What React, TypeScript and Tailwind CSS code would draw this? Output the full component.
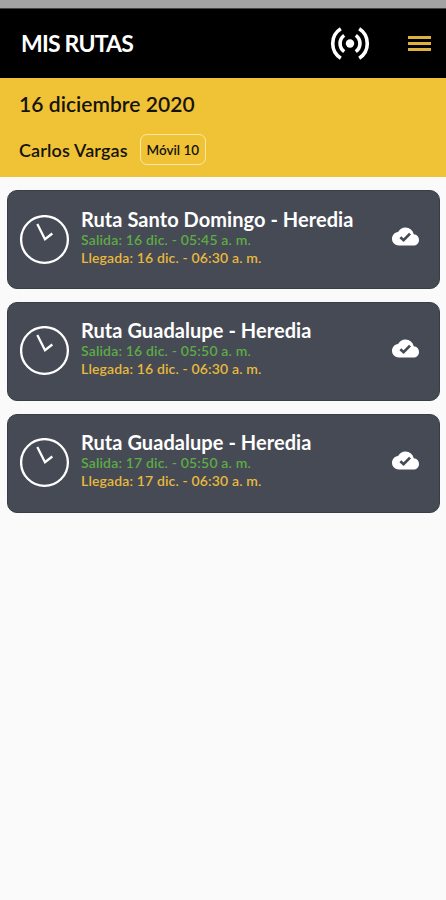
import React from 'react';

interface Route {
  id: number;
  name: string;
  departure: string;
  arrival: string;
}

const routes: Route[] = [
  { id: 1, name: 'Ruta Santo Domingo - Heredia', departure: '16 dic. - 05:45 a. m.', arrival: '16 dic. - 06:30 a. m.' },
  { id: 2, name: 'Ruta Guadalupe - Heredia', departure: '16 dic. - 05:50 a. m.', arrival: '16 dic. - 06:30 a. m.' },
  { id: 3, name: 'Ruta Guadalupe - Heredia', departure: '17 dic. - 05:50 a. m.', arrival: '17 dic. - 06:30 a. m.' },
];

const BroadcastIcon: React.FC = () => (
  <svg width="40" height="34" viewBox="0 0 40 34" fill="none" stroke="white" strokeWidth="3.6">
    <circle cx="20" cy="16.5" r="4.2" fill="white" stroke="none" />
    <path d="M14.2 8.4A10 10 0 0 0 14.2 24.6M25.8 8.4A10 10 0 0 1 25.8 24.6" />
    <path d="M10.8 1.8A17.4 17.4 0 0 0 10.8 31.2M29.2 1.8A17.4 17.4 0 0 1 29.2 31.2" />
  </svg>
);

const ClockIcon: React.FC = () => (
  <svg width="50" height="50" viewBox="0 0 50 50" fill="none" stroke="white" strokeWidth="2.3" className="shrink-0">
    <circle cx="24.5" cy="24.5" r="23.4" />
    <path d="M17.3 9L25 24.2L32.3 18.5" />
  </svg>
);

const CloudDoneIcon: React.FC = () => (
  <svg width="27" height="27" viewBox="0 0 24 24" className="shrink-0">
    <path
      fill="white"
      d="M19.35 10.04C18.67 6.59 15.64 4 12 4 9.11 4 6.6 5.64 5.35 8.04 2.34 8.36 0 10.91 0 14c0 3.31 2.69 6 6 6h13c2.76 0 5-2.24 5-5 0-2.64-2.05-4.78-4.65-4.96z"
    />
    <path d="M7.4 12.6L10.3 15.3L16 9.4" fill="none" stroke="#464a54" strokeWidth="2.4" />
  </svg>
);

const RouteCard: React.FC<{ route: Route }> = ({ route }) => (
  <div className="flex h-[99px] items-center rounded-[10px] border border-[#393d45] bg-[#464a54] pl-3 pr-5">
    <ClockIcon />
    <div className="ml-[11px] mb-1.5 flex-1 whitespace-nowrap">
      <h2 className="text-[20px] leading-6 font-bold tracking-[0.05px] text-white">{route.name}</h2>
      <p className="text-[14px] leading-[18px] font-semibold tracking-[0.17px] text-[#5dac46]">Salida: {route.departure}</p>
      <p className="text-[14px] leading-[18px] font-semibold tracking-[0.15px] text-[#e8b93c]">Llegada: {route.arrival}</p>
    </div>
    <div className="mb-1.5">
      <CloudDoneIcon />
    </div>
  </div>
);

const App: React.FC = () => {
  return (
    <div className="h-[900px] w-[446px] overflow-hidden bg-[#fafafa] font-['Lato',sans-serif]">
      {/* Status bar */}
      <div className="h-2 bg-[#a3a3a3]" />

      {/* Header */}
      <header className="flex h-[70px] items-center border-t border-[#444444] bg-black pl-[21px] pr-[15px]">
        <h1 className="flex-1 text-[23px] font-bold tracking-[-0.8px] text-white">MIS RUTAS</h1>
        <BroadcastIcon />
        <div className="ml-[38px] flex w-[23px] flex-col gap-[3px]">
          <span className="h-[3px] bg-[#dcb23c]" />
          <span className="h-[3px] bg-[#dcb23c]" />
          <span className="h-[3px] bg-[#dcb23c]" />
        </div>
      </header>

      {/* Date and driver */}
      <section className="h-[99px] bg-[#f0c235] px-[19px] pt-[13px] text-[#15130d]">
        <p className="text-[21px] leading-[26px] font-semibold tracking-[0.05px]">16 diciembre 2020</p>
        <div className="mt-[17px] flex items-center">
          <span className="text-[18px] leading-[30px] font-semibold tracking-[0.15px]">Carlos Vargas</span>
          <span className="ml-3 flex h-[31px] w-[66px] items-center justify-center rounded-[7px] border-[1.5px] border-[#fae9a6] pt-px text-[13.5px] font-semibold whitespace-nowrap">
            Móvil 10
          </span>
        </div>
      </section>

      {/* Routes */}
      <main className="flex flex-col gap-[12.8px] pt-[13px] pl-[7px] pr-[6px]">
        {routes.map((route) => (
          <RouteCard key={route.id} route={route} />
        ))}
      </main>
    </div>
  );
};

export default App;
